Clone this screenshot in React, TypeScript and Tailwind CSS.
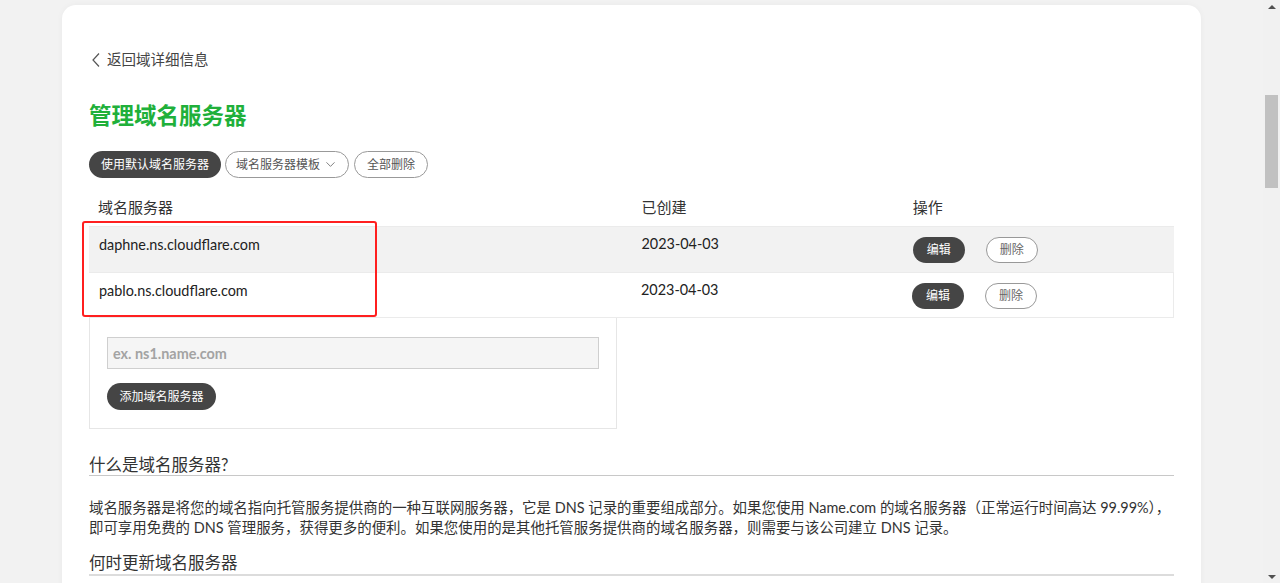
import { ChevronDown } from "lucide-react";

const SERVERS = [
  { host: "daphne.ns.cloudflare.com", created: "2023-04-03" },
  { host: "pablo.ns.cloudflare.com", created: "2023-04-03" },
];

const pill = "h-[27px] rounded-full text-[12px] leading-none flex items-center justify-center";

export default function App() {
  return (
    <div className="flex h-[583px] overflow-hidden bg-[#f2f2f2] text-[#333] font-['Lato','Noto_Sans_CJK_SC',sans-serif]">
      <div className="flex-1 min-w-0">
        <div className="mx-[62px] mt-[5px] h-[600px] rounded-[14px] bg-white px-[27px] pt-[45px] shadow-[0_0_6px_rgba(0,0,0,0.04)]">
          {/* back link */}
          <div className="flex items-center h-[20px] text-[14.5px] text-[#444]">
            <svg width="8" height="14" viewBox="0 0 8 14" className="ml-[3px] mr-[7px]" fill="none" stroke="#555" strokeWidth="1.2">
              <polyline points="7,0.5 1,7 7,13.5" />
            </svg>
            <span>返回域详细信息</span>
          </div>

          <h1 className="mt-[31px] h-[30px] leading-[30px] text-[22.5px] font-bold text-[#20b03a]">管理域名服务器</h1>

          {/* actions */}
          <div className="mt-[20px] flex gap-[4px]">
            <button className={`${pill} w-[132px] bg-[#454545] text-white`}>使用默认域名服务器</button>
            <button className={`${pill} w-[124px] border border-[#999] text-[#555] gap-[3px]`}>
              域名服务器模板
              <ChevronDown className="w-[15px] h-[15px]" strokeWidth={1.2} />
            </button>
            <button className={`${pill} ml-[1px] w-[74px] border border-[#999] text-[#555]`}>全部删除</button>
          </div>

          {/* table */}
          <div className="relative mt-[10px]">
            <div className="grid grid-cols-[2fr_1fr_1fr] h-[38px] items-center text-[15px] text-[#333]">
              <div className="pl-[9px]">域名服务器</div>
              <div className="pl-[10px]">已创建</div>
              <div className="pl-[10px]">操作</div>
            </div>
            {SERVERS.map((s, i) => (
              <div
                key={s.host}
                className={`grid grid-cols-[2fr_1fr_1fr] h-[46px] border-t border-[#ebebeb] ${i === 0 ? "bg-[#f2f2f2]" : "bg-white border-b border-r"}`}
              >
                <div className="pl-[10px] pt-[8px] leading-[20px] text-[14.4px] text-[#222]">{s.host}</div>
                <div className="pl-[10px] pt-[7px] leading-[20px] text-[14.4px] text-[#222]">{s.created}</div>
                <div className="pl-[10px] pt-[10px] flex gap-[21px]">
                  <button className="h-[26px] w-[52px] rounded-full bg-[#454545] text-white text-[12px]">编辑</button>
                  <button className="h-[26px] w-[52px] rounded-full border border-[#999] bg-white text-[#666] text-[12px]">删除</button>
                </div>
              </div>
            ))}

            {/* highlight box */}
            <div className="absolute left-[-7px] top-[33px] w-[295px] h-[96px] rounded-[3px] border-[2.5px] border-[#ff1f1f] pointer-events-none" />
          </div>

          {/* add server */}
          <div className="w-[528px] border border-t-0 border-[#e6e6e6] px-[17px] pt-[19px] pb-[18px]">
            <input
              className="block w-[492px] h-[32px] border border-[#cfcfcf] bg-[#f5f5f5] px-[5px] text-[14.4px] font-bold placeholder:text-[#a3a3a3] outline-none"
              placeholder="ex. ns1.name.com"
            />
            <button className={`${pill} mt-[14px] w-[109px] bg-[#454545] text-white`}>添加域名服务器</button>
          </div>

          {/* info */}
          <h2 className="mt-[23px] h-[24px] pt-[3px] leading-[21px] text-[16.5px] text-[#333] border-b border-[#c8c8c8]">什么是域名服务器?</h2>
          <p className="mt-[22px] text-[14.45px] leading-[20px] text-[#333]">
            域名服务器是将您的域名指向托管服务提供商的一种互联网服务器，它是 DNS 记录的重要组成部分。如果您使用 Name.com 的域名服务器（正常运行时间高达 99.99%），
            <br />
            即可享用免费的 DNS 管理服务，获得更多的便利。如果您使用的是其他托管服务提供商的域名服务器，则需要与该公司建立 DNS 记录。
          </p>
          <h2 className="mt-[13px] h-[25px] pt-[2px] leading-[21px] text-[16.5px] text-[#333] border-b-2 border-[#dcdcdc]">何时更新域名服务器</h2>
        </div>
      </div>

      {/* scrollbar */}
      <div className="relative w-[17px] shrink-0 bg-[#f1f1f1]">
        <div className="absolute left-1/2 top-[5px] -translate-x-1/2 w-0 h-0 border-x-[4px] border-x-transparent border-b-[4px] border-b-[#505050]" />
        <div className="absolute left-[2px] top-[95px] w-[13px] h-[93px] bg-[#c1c1c1]" />
        <div className="absolute left-1/2 bottom-[4px] -translate-x-1/2 w-0 h-0 border-x-[4px] border-x-transparent border-t-[4px] border-t-[#505050]" />
      </div>
    </div>
  );
}
